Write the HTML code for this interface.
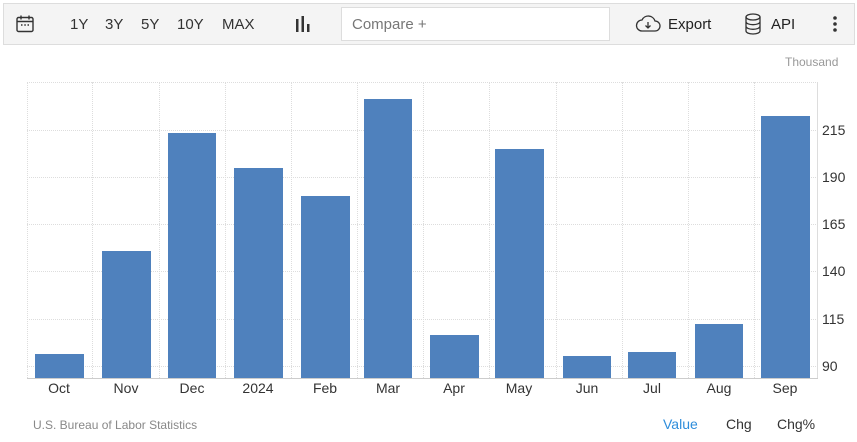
<!DOCTYPE html>
<html><head><style>
body{margin:0;width:857px;height:442px;background:#fff;font-family:"Liberation Sans",sans-serif;position:relative;overflow:hidden}
.tb{position:absolute;left:3px;top:3px;width:850px;height:40px;background:#f4f4f4;border:1px solid #ddd}
.t{position:absolute;font-size:15px;color:#333;top:16px}
.cmp{position:absolute;left:341px;top:7px;width:269px;height:34px;background:#fff;border:1px solid #ddd;box-sizing:border-box;color:#777;font-size:15px;padding:8px 10px}
.bar{position:absolute;background:#4f81bd}
.xl{position:absolute;top:380px;font-size:14px;color:#333;width:66px;text-align:center}
.yl{position:absolute;left:822px;font-size:14px;color:#333}
.hg{position:absolute;left:27px;width:791px;border-top:1px dotted #ddd}
.vg{position:absolute;top:82px;height:296px;border-left:1px dotted #ddd}
</style></head><body>
<div class="tb"></div>
<svg style="position:absolute;left:15px;top:14px" width="20" height="20" viewBox="0 0 20 20" fill="none" stroke="#333" stroke-width="1.4"><rect x="2" y="3.5" width="16" height="14" rx="1.5"/><path d="M2 7.5h16M6 1.5v4M14 1.5v4"/><path d="M6 11h1.5M9.3 11h1.5M12.5 11h1.5" stroke-width="1.6"/></svg>
<span class="t" style="left:70px">1Y</span><span class="t" style="left:105px">3Y</span><span class="t" style="left:141px">5Y</span><span class="t" style="left:177px">10Y</span><span class="t" style="left:222px">MAX</span>
<svg style="position:absolute;left:294px;top:15px" width="18" height="18"><rect x="2" y="4" width="2.5" height="13" fill="#333"/><rect x="7.5" y="1" width="2.5" height="16" fill="#333"/><rect x="13" y="9" width="2.5" height="8" fill="#333"/></svg>
<div class="cmp">Compare +</div>
<svg style="position:absolute;left:635px;top:15px" width="26" height="18" viewBox="0 0 26 18" fill="none" stroke="#333" stroke-width="1.3"><path d="M7 16h13a5 5 0 0 0 0-10 7 7 0 0 0-13-1 5.5 5.5 0 0 0 0 11z"/><path d="M13 7v6M10.5 10.5l2.5 2.5 2.5-2.5"/></svg>
<span class="t" style="left:668px;color:#222">Export</span>
<svg style="position:absolute;left:744px;top:13px" width="18" height="22" viewBox="0 0 18 22" fill="none" stroke="#333" stroke-width="1.3"><ellipse cx="9" cy="4" rx="7" ry="3"/><path d="M2 4v14c0 1.7 3 3 7 3s7-1.3 7-3V4M2 8.7c0 1.7 3 3 7 3s7-1.3 7-3M2 13.3c0 1.7 3 3 7 3s7-1.3 7-3"/></svg>
<span class="t" style="left:771px;color:#222">API</span>
<svg style="position:absolute;left:832px;top:15px" width="6" height="18"><circle cx="3" cy="3" r="1.8" fill="#333"/><circle cx="3" cy="9" r="1.8" fill="#333"/><circle cx="3" cy="15" r="1.8" fill="#333"/></svg>
<div style="position:absolute;left:785px;top:55px;font-size:12px;color:#999">Thousand</div>
<div class="hg" style="top:82px"></div><div class="hg" style="top:130px"></div><div class="hg" style="top:177px"></div><div class="hg" style="top:224px"></div><div class="hg" style="top:271px"></div><div class="hg" style="top:319px"></div><div class="hg" style="top:366px"></div>
<div class="vg" style="left:27px"></div><div class="vg" style="left:92px"></div><div class="vg" style="left:159px"></div><div class="vg" style="left:225px"></div><div class="vg" style="left:291px"></div><div class="vg" style="left:357px"></div><div class="vg" style="left:423px"></div><div class="vg" style="left:489px"></div><div class="vg" style="left:556px"></div><div class="vg" style="left:622px"></div><div class="vg" style="left:688px"></div><div class="vg" style="left:754px"></div>
<div style="position:absolute;left:817px;top:82px;height:297px;border-left:1px solid #ddd"></div>
<div style="position:absolute;left:27px;top:378px;width:791px;border-top:1px solid #ccc"></div>
<div class="bar" style="left:35px;top:354px;width:49px;height:24px"></div>
<div class="bar" style="left:102px;top:251px;width:49px;height:127px"></div>
<div class="bar" style="left:168px;top:133px;width:48px;height:245px"></div>
<div class="bar" style="left:234px;top:168px;width:49px;height:210px"></div>
<div class="bar" style="left:301px;top:196px;width:49px;height:182px"></div>
<div class="bar" style="left:364px;top:99px;width:48px;height:279px"></div>
<div class="bar" style="left:430px;top:335px;width:49px;height:43px"></div>
<div class="bar" style="left:495px;top:149px;width:49px;height:229px"></div>
<div class="bar" style="left:563px;top:356px;width:48px;height:22px"></div>
<div class="bar" style="left:628px;top:352px;width:48px;height:26px"></div>
<div class="bar" style="left:695px;top:324px;width:48px;height:54px"></div>
<div class="bar" style="left:761px;top:116px;width:49px;height:262px"></div>
<div class="yl" style="top:122px">215</div><div class="yl" style="top:169px">190</div><div class="yl" style="top:216px">165</div><div class="yl" style="top:263px">140</div><div class="yl" style="top:311px">115</div><div class="yl" style="top:358px">90</div>
<div class="xl" style="left:26px">Oct</div><div class="xl" style="left:93px">Nov</div><div class="xl" style="left:159px">Dec</div><div class="xl" style="left:225px">2024</div><div class="xl" style="left:292px">Feb</div><div class="xl" style="left:355px">Mar</div><div class="xl" style="left:421px">Apr</div><div class="xl" style="left:486px">May</div><div class="xl" style="left:554px">Jun</div><div class="xl" style="left:619px">Jul</div><div class="xl" style="left:686px">Aug</div><div class="xl" style="left:752px">Sep</div>
<div style="position:absolute;left:33px;top:418px;font-size:12px;color:#888">U.S. Bureau of Labor Statistics</div>
<div style="position:absolute;left:663px;top:416px;font-size:14px;color:#2e8ddb">Value</div>
<div style="position:absolute;left:726px;top:416px;font-size:14px;color:#333">Chg</div>
<div style="position:absolute;left:777px;top:416px;font-size:14px;color:#333">Chg%</div>
</body></html>
